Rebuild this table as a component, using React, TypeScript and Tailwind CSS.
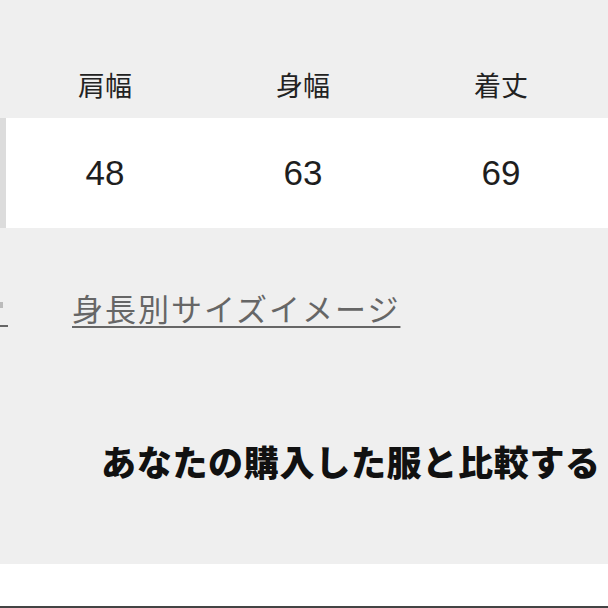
import React from "react";

const jp = { fontFamily: '"Noto Sans CJK JP", "Noto Sans", sans-serif' };
const num = { fontFamily: '"Liberation Sans", Arial, sans-serif' };

export default function App() {
  const headers = ["肩幅", "身幅", "着丈"];
  const values = ["48", "63", "69"];
  return (
    <div className="w-[608px] h-[608px] overflow-hidden bg-[#efefef] flex flex-col" style={jp}>
      <div className="h-[118px] shrink-0 flex pl-[6px] pt-[65px]">
        {headers.map((h) => (
          <div key={h} className="w-[198px] text-center text-[27px] leading-[40px] text-[#222]" style={jp}>
            {h}
          </div>
        ))}
      </div>
      <div className="h-[110px] shrink-0 flex">
        <div className="w-[6px] bg-[#dcdcdc]" />
        <div className="flex-1 bg-white flex items-center">
          {values.map((v) => (
            <div key={v} className="w-[198px] text-center text-[35px] leading-[40px] text-[#1e1e1e]" style={num}>
              {v}
            </div>
          ))}
        </div>
      </div>
      <div className="flex-1 flex flex-col">
        <div className="mt-[60px] h-[40px] flex items-start">
          <div className="w-[8px] h-[39px] flex flex-col justify-between">
            <div className="mt-[14px] w-[3px] h-[6px] bg-[#bbb]" />
            <div className="h-[2px] bg-[#666]" />
          </div>
          <span
            className="ml-[64px] text-[31px] leading-[40px] tracking-[2px] text-[#666] underline decoration-2 underline-offset-[5px] decoration-[#666]"
            style={jp}
          >
            身長別サイズイメージ
          </span>
        </div>
        <div className="mt-[108px] h-[50px] pl-[101px] flex items-center">
          <span className="text-[35px] leading-[50px] font-black tracking-[0.7px] text-[#111] whitespace-nowrap" style={jp}>
            あなたの購入した服と比較する
          </span>
        </div>
      </div>
      <div className="h-[42px] shrink-0 bg-white" />
      <div className="h-[2px] shrink-0 bg-[#444]" />
    </div>
  );
}
